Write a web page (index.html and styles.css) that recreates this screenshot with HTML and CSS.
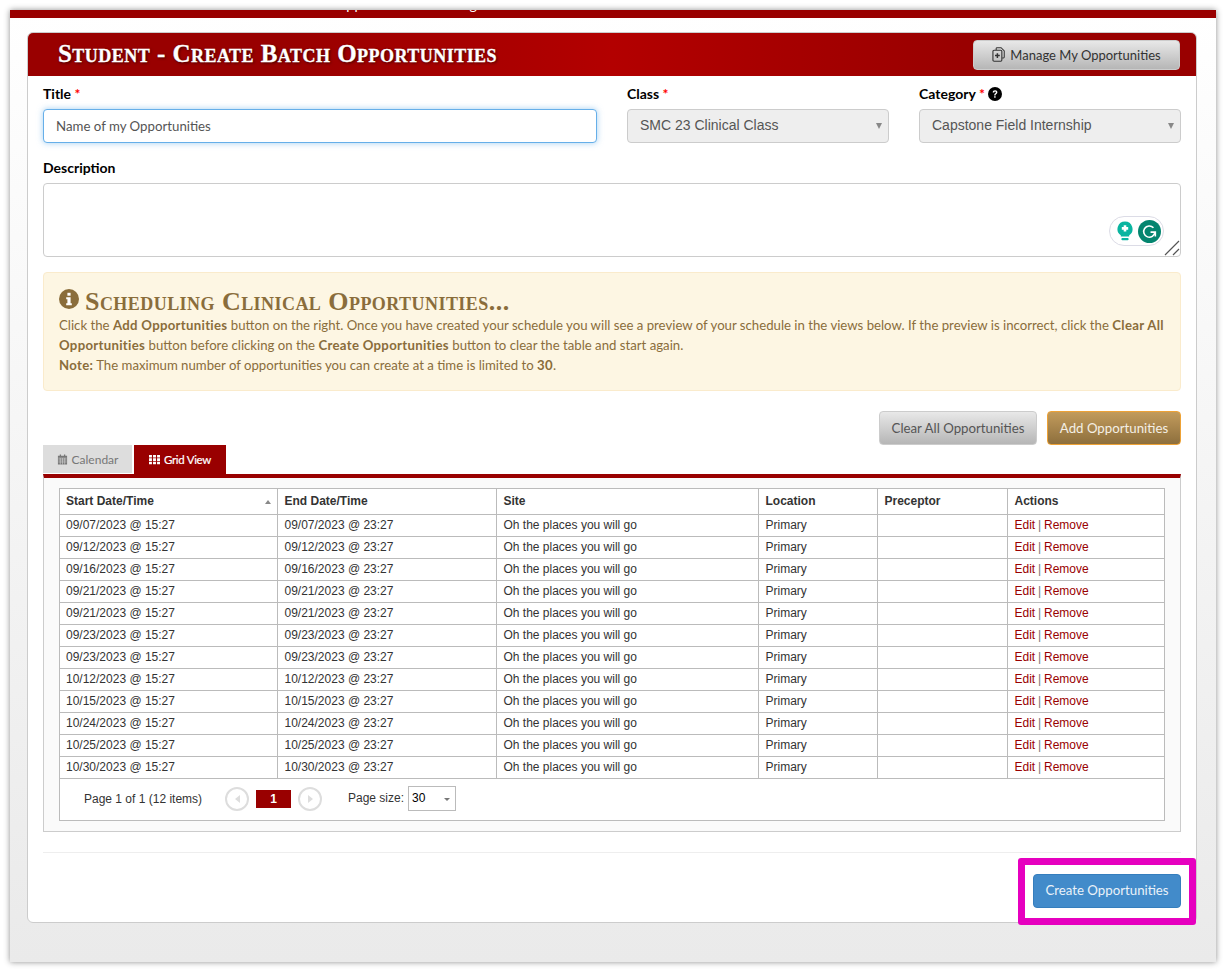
FILE: index.html
```html
<!DOCTYPE html>
<html>
<head>
  <meta charset="UTF-8">
  <title>Student - Create Batch Opportunities</title>
  <link rel="stylesheet" href="styles.css">
</head>
<body>
  <div class="window">
    <div class="top-bar"><span class="top-bar-text">Opportunities Catalog</span></div>

    <div class="card">
      <div class="card-header">
        <div class="card-title">Student - Create Batch Opportunities</div>
        <button class="button button-grey manage-button">
          <svg class="manage-icon" viewBox="0 0 14 16" width="13" height="15"><path d="M4.5 3.2V1.6c0-.5.4-.9.9-.9h4.4l3.4 3.4v6.7c0 .5-.4.9-.9.9H11" fill="none" stroke="#333" stroke-width="1.1"/><rect x="1" y="3.4" width="9.6" height="11.8" rx="1.2" fill="none" stroke="#333" stroke-width="1.2"/><path d="M5.8 6.6v5.2M3.2 9.2h5.2" stroke="#333" stroke-width="1.6"/></svg>
          Manage My Opportunities
        </button>
      </div>

      <div class="card-body">
        <div class="form-row">
          <div class="field">
            <label class="field-label">Title <span class="required">*</span></label>
            <input type="text" class="text-input text-input-focus" value="Name of my Opportunities">
          </div>
          <div class="field">
            <label class="field-label">Class <span class="required">*</span></label>
            <div class="select-wrapper">
              <select class="select-input" disabled><option>SMC 23 Clinical Class</option></select>
            </div>
          </div>
          <div class="field">
            <label class="field-label">Category <span class="required">*</span>
              <svg class="help-icon" viewBox="0 0 14 14" width="14" height="14"><circle cx="7" cy="7" r="7" fill="#000"/><path d="M4.7 5.4c0-1.4 1-2.2 2.4-2.2s2.3.8 2.3 2c0 1.8-1.9 1.7-1.9 3.2H6.2c0-2.2 1.7-2 1.7-3.1 0-.5-.3-.8-.8-.8-.6 0-.9.4-.9 1z" fill="#fff"/><rect x="6.2" y="9.2" width="1.4" height="1.5" fill="#fff"/></svg>
            </label>
            <div class="select-wrapper">
              <select class="select-input" disabled><option>Capstone Field Internship</option></select>
            </div>
          </div>
        </div>

        <div class="field description-field">
          <label class="field-label">Description</label>
          <div class="textarea-wrapper">
            <textarea class="description-input"></textarea>
            <div class="grammarly">
              <svg viewBox="0 0 16 20" width="16" height="20"><path d="M8 .5a7.5 7.5 0 0 0-4.2 13.7V15.5h8.4v-1.3A7.5 7.5 0 0 0 8 .5z" fill="#0ab5a0"/><path d="M8 4.2v6.4M4.8 7.4h6.4" stroke="#fff" stroke-width="2.6"/><rect x="4.4" y="17" width="7.2" height="2.2" rx="1" fill="#0ab5a0"/></svg>
              <svg viewBox="0 0 22 22" width="23" height="23"><circle cx="11" cy="11" r="11" fill="#04856f"/><path d="M16.2 11.6a5.4 5.4 0 1 1-1.4-4.2" fill="none" stroke="#fff" stroke-width="1.5"/><path d="M12 11.6h4.6v4.2" fill="none" stroke="#fff" stroke-width="1.5"/></svg>
            </div>
            <svg class="resize-grip" viewBox="0 0 16 16" width="16" height="16"><path d="M1 15 15 1M9 15l6-6" stroke="#555" stroke-width="1.2"/></svg>
          </div>
        </div>

        <div class="alert">
          <div class="alert-title">
            <svg class="alert-icon" viewBox="0 0 20 20" width="20" height="20"><circle cx="10" cy="10" r="10" fill="#8a6d3b"/><rect x="8.4" y="3.8" width="3.2" height="2.9" fill="#fff"/><path d="M7.2 8.2h4.4v6h1.2v2H7.2v-2h1.2v-4H7.2z" fill="#fff"/></svg>
            <span>Scheduling Clinical Opportunities...</span>
          </div>
          <div class="alert-text">
            Click the <b>Add Opportunities</b> button on the right. Once you have created your schedule you will see a preview of your schedule in the views below. If the preview is incorrect, click the <b>Clear All Opportunities</b> button before clicking on the <b>Create Opportunities</b> button to clear the table and start again.<br>
            <b>Note:</b> The maximum number of opportunities you can create at a time is limited to <b>30</b>.
          </div>
        </div>

        <div class="action-row">
          <button class="button button-grey clear-button">Clear All Opportunities</button>
          <button class="button button-gold add-button">Add Opportunities</button>
        </div>

        <div class="tabs">
          <div class="tab tab-off">
            <svg viewBox="0 0 12 12" width="11" height="11"><path d="M1 2h10v9.5H1zM3 .5h1.4V2H3zM7.6.5H9V2H7.6z" fill="#777"/><path d="M1.5 4.5h9M1.5 6.5h9M1.5 8.7h9M3.6 4.5v7M6 4.5v7M8.4 4.5v7" stroke="#ddd" stroke-width=".6"/></svg>
            Calendar
          </div>
          <div class="tab tab-on">
            <svg viewBox="0 0 12 12" width="11" height="11"><path d="M0 1h3.2v2.8H0zM4.4 1h3.2v2.8H4.4zM8.8 1H12v2.8H8.8zM0 4.7h3.2v2.8H0zM4.4 4.7h3.2v2.8H4.4zM8.8 4.7H12v2.8H8.8zM0 8.4h3.2v2.8H0zM4.4 8.4h3.2v2.8H4.4zM8.8 8.4H12v2.8H8.8z" fill="#fff"/></svg>
            Grid View
          </div>
        </div>

        <div class="grid-panel">
          <div class="grid-box">
            <table class="grid">
              <colgroup>
                <col class="col-start"><col class="col-end"><col class="col-site"><col class="col-location"><col class="col-preceptor"><col>
              </colgroup>
              <thead>
                <tr><th>Start Date/Time<span class="sort-arrow"></span></th><th>End Date/Time</th><th>Site</th><th>Location</th><th>Preceptor</th><th>Actions</th></tr>
              </thead>
              <tbody>
                <tr><td>09/07/2023 @ 15:27</td><td>09/07/2023 @ 23:27</td><td>Oh the places you will go</td><td>Primary</td><td></td><td><a>Edit</a> | <a>Remove</a></td></tr>
                <tr><td>09/12/2023 @ 15:27</td><td>09/12/2023 @ 23:27</td><td>Oh the places you will go</td><td>Primary</td><td></td><td><a>Edit</a> | <a>Remove</a></td></tr>
                <tr><td>09/16/2023 @ 15:27</td><td>09/16/2023 @ 23:27</td><td>Oh the places you will go</td><td>Primary</td><td></td><td><a>Edit</a> | <a>Remove</a></td></tr>
                <tr><td>09/21/2023 @ 15:27</td><td>09/21/2023 @ 23:27</td><td>Oh the places you will go</td><td>Primary</td><td></td><td><a>Edit</a> | <a>Remove</a></td></tr>
                <tr><td>09/21/2023 @ 15:27</td><td>09/21/2023 @ 23:27</td><td>Oh the places you will go</td><td>Primary</td><td></td><td><a>Edit</a> | <a>Remove</a></td></tr>
                <tr><td>09/23/2023 @ 15:27</td><td>09/23/2023 @ 23:27</td><td>Oh the places you will go</td><td>Primary</td><td></td><td><a>Edit</a> | <a>Remove</a></td></tr>
                <tr><td>09/23/2023 @ 15:27</td><td>09/23/2023 @ 23:27</td><td>Oh the places you will go</td><td>Primary</td><td></td><td><a>Edit</a> | <a>Remove</a></td></tr>
                <tr><td>10/12/2023 @ 15:27</td><td>10/12/2023 @ 23:27</td><td>Oh the places you will go</td><td>Primary</td><td></td><td><a>Edit</a> | <a>Remove</a></td></tr>
                <tr><td>10/15/2023 @ 15:27</td><td>10/15/2023 @ 23:27</td><td>Oh the places you will go</td><td>Primary</td><td></td><td><a>Edit</a> | <a>Remove</a></td></tr>
                <tr><td>10/24/2023 @ 15:27</td><td>10/24/2023 @ 23:27</td><td>Oh the places you will go</td><td>Primary</td><td></td><td><a>Edit</a> | <a>Remove</a></td></tr>
                <tr><td>10/25/2023 @ 15:27</td><td>10/25/2023 @ 23:27</td><td>Oh the places you will go</td><td>Primary</td><td></td><td><a>Edit</a> | <a>Remove</a></td></tr>
                <tr><td>10/30/2023 @ 15:27</td><td>10/30/2023 @ 23:27</td><td>Oh the places you will go</td><td>Primary</td><td></td><td><a>Edit</a> | <a>Remove</a></td></tr>
              </tbody>
            </table>
            <div class="pager">
              <span class="pager-info">Page 1 of 1 (12 items)</span>
              <span class="pager-nav"><i class="pager-arrow pager-prev"></i></span>
              <span class="pager-current">1</span>
              <span class="pager-nav"><i class="pager-arrow pager-next"></i></span>
              <span class="pager-size">Page size:</span>
              <span class="pager-select">30</span>
            </div>
          </div>
        </div>

        <div class="divider"></div>

        <div class="footer-row">
          <button class="button button-blue">Create Opportunities</button>
        </div>
      </div>
    </div>

    <div class="highlight-box"></div>
  </div>
</body>
</html>
```

FILE: styles.css
```css
* {
  box-sizing: border-box;
}

body {
  margin: 0;
  padding: 10px;
  background: #fff;
  font-family: Lato, Arial, sans-serif;
  font-size: 14px;
  color: #333;
}

.window {
  position: relative;
  width: 1206px;
  height: 952px;
  background: linear-gradient(#fff, #eaeaea);
  box-shadow: 0 0 6px rgba(0,0,0,0.45);
}

.top-bar {
  height: 8px;
  background: #990000;
  overflow: hidden;
  color: #fff;
  font-size: 14px;
  letter-spacing: 0.3px;
  padding-left: 325px;
}

.top-bar-text {
  display: block;
  margin-top: -14px;
  line-height: 18px;
}

.card {
  width: 1170px;
  height: 891px;
  margin: 14px 0 0 17px;
  background: #fff;
  border: 1px solid #ccc;
  border-radius: 6px;
  overflow: hidden;
}

.card-header {
  display: flex;
  align-items: center;
  justify-content: space-between;
  height: 43px;
  padding: 0 16px 0 30px;
  background: linear-gradient(to right, #990000 0%, #990000 22%, #b30000 50%, #990000 80%, #990000 100%);
}

.card-title {
  margin-top: -2px;
  font-family: "Liberation Serif", serif;
  font-variant: small-caps;
  font-weight: bold;
  font-size: 25px;
  letter-spacing: 0.47px;
  color: #fff;
  -webkit-text-stroke: 0.3px #fff;
  text-shadow: 1px 1px 3px rgba(0,0,0,0.7);
}

.card-body {
  padding: 9px 15px 0;
}

.button {
  height: 34px;
  padding: 0;
  border: 1px solid #ccc;
  border-radius: 4px;
  font-family: Lato, Arial, sans-serif;
  font-size: 13.25px;
  white-space: nowrap;
}

.button-grey {
  background: linear-gradient(#e8e8e8, #b6b6b6);
  color: #444;
}

.button-gold {
  background: linear-gradient(#c29b5c, #8d6f3d);
  border-color: #eea236;
  color: #f4efe5;
}

.button-blue {
  width: 148px;
  padding-bottom: 2px;
  background: #428bca;
  border-color: #357ebd;
  color: #eaf2f9;
}

.manage-button {
  display: flex;
  align-items: center;
  gap: 5px;
  width: 207px;
  height: 30px;
  justify-content: center;
  font-size: 13px;
  color: #333;
}

.manage-icon {
  flex: none;
}

.form-row {
  display: grid;
  grid-template-columns: 554px 262px 262px;
  gap: 30px;
  padding-top: 1px;
}

.field-label {
  display: block;
  height: 23px;
  line-height: 16px;
  font-weight: bold;
  font-size: 14px;
  color: #000;
}

.required {
  color: #f00;
}

.help-icon {
  margin: -4px 0;
  vertical-align: 2px;
}

.text-input {
  display: block;
  width: 100%;
  height: 34px;
  padding: 0 12px 1px;
  border: 1px solid #ccc;
  border-radius: 4px;
  font-family: Lato, Arial, sans-serif;
  font-size: 13.25px;
  color: #555;
  background: #fff;
}

.text-input-focus {
  border-color: #66afe9;
  outline: none;
  box-shadow: 0 0 6px rgba(102,175,233,0.6);
}

.select-wrapper {
  position: relative;
}

.select-wrapper::after {
  content: "";
  position: absolute;
  top: 14px;
  right: 7px;
  border-left: 3px solid transparent;
  border-right: 3px solid transparent;
  border-top: 6px solid #888;
}

.select-input {
  display: block;
  width: 100%;
  height: 34px;
  padding: 0 12px 2px;
  border: 1px solid #ccc;
  border-radius: 4px;
  font-family: "Liberation Sans", Arial, sans-serif;
  font-size: 14px;
  color: #555;
  background: #eee;
  opacity: 1;
  appearance: none;
}

.description-field {
  margin-top: 17px;
}

.textarea-wrapper {
  position: relative;
}

.description-input {
  display: block;
  width: 100%;
  height: 74px;
  border: 1px solid #ccc;
  border-radius: 4px;
  background: #fff;
  resize: none;
}

.grammarly {
  position: absolute;
  top: 33px;
  right: 17px;
  display: flex;
  align-items: center;
  justify-content: space-between;
  width: 55px;
  height: 30px;
  padding: 0 2px 0 7px;
  background: #fff;
  border: 1px solid #dcdce6;
  border-radius: 15px;
}

.resize-grip {
  position: absolute;
  right: 1px;
  bottom: 1px;
}

.alert {
  height: 119px;
  margin-top: 15px;
  padding: 17px 5px 0 15px;
  background: #fdf6e3;
  border: 1px solid #faebcc;
  border-radius: 4px;
  color: #8a6d3b;
}

.alert-title {
  display: flex;
  align-items: center;
  gap: 6px;
  height: 24px;
  font-family: "Liberation Serif", serif;
  font-variant: small-caps;
  font-weight: bold;
  font-size: 26px;
  letter-spacing: 0.45px;
}

.alert-icon {
  flex: none;
  margin-top: -6px;
}

.alert-text {
  font-size: 13.2px;
  line-height: 20px;
  margin-top: 1px;
}

.alert-text b {
  letter-spacing: 0.3px;
}

.action-row {
  display: flex;
  justify-content: flex-end;
  gap: 10px;
  margin-top: 20px;
}

.clear-button {
  width: 158px;
  color: #555;
}

.add-button {
  width: 134px;
}

.tabs {
  display: flex;
  gap: 2px;
  height: 29px;
}

.tab {
  display: flex;
  align-items: center;
  justify-content: center;
  gap: 4px;
  font-size: 12px;
}

.tab-off {
  width: 89px;
  height: 28px;
  background: #ddd;
  color: #777;
}

.tab-on {
  width: 92px;
  font-size: 11.5px;
  letter-spacing: -0.3px;
  -webkit-text-stroke: 0.2px #fff;
  background: #990000;
  color: #fff;
}

.grid-panel {
  height: 358px;
  padding: 10px 15px 0;
  background: #fafafa;
  border: 1px solid #ccc;
  border-top: 4px solid #990000;
}

.grid-box {
  width: 1106px;
  height: 333px;
  background: #fff;
  border: 1px solid #bbb;
}

.grid {
  width: 100%;
  border-collapse: collapse;
  table-layout: fixed;
  font-family: "Liberation Sans", Arial, sans-serif;
  font-size: 12px;
  color: #333;
}

.col-start { width: 217px; }
.col-end { width: 219px; }
.col-site { width: 262px; }
.col-location { width: 119px; }
.col-preceptor { width: 130px; }

.grid th {
  position: relative;
  height: 25px;
  padding: 0 6px 0 7px;
  text-align: left;
  font-weight: bold;
  border-right: 1px solid #bbb;
  border-bottom: 1px solid #bbb;
}

.grid td {
  height: 22px;
  padding: 0 6px 0 7px;
  border-right: 1px solid #bbb;
  border-bottom: 1px solid #bbb;
}

.grid th:first-child,
.grid td:first-child {
  padding-left: 6px;
}

.grid th:last-child,
.grid td:last-child {
  border-right: none;
}

.grid td:last-child {
  color: #777;
  word-spacing: -0.5px;
}

.grid a {
  color: #990000;
}

.sort-arrow {
  position: absolute;
  top: 11px;
  right: 6px;
  border-left: 3px solid transparent;
  border-right: 3px solid transparent;
  border-bottom: 4px solid #888;
}

.pager {
  display: flex;
  align-items: center;
  height: 42px;
  padding: 0 0 2px 24px;
  font-family: "Liberation Sans", Arial, sans-serif;
  font-size: 12px;
  color: #333;
}

.pager-info {
  width: 141px;
}

.pager-nav {
  display: flex;
  align-items: center;
  justify-content: center;
  width: 24px;
  height: 24px;
  border: 2px solid #ddd;
  border-radius: 50%;
}

.pager-arrow {
  border-top: 4px solid transparent;
  border-bottom: 4px solid transparent;
}

.pager-prev {
  border-right: 5px solid #ddd;
}

.pager-next {
  border-left: 5px solid #ddd;
}

.pager-current {
  width: 35px;
  height: 18px;
  margin: 0 7px;
  line-height: 18px;
  text-align: center;
  font-weight: bold;
  background: #990000;
  color: #fff;
}

.pager-size {
  margin: -1px 0 0 26px;
}

.pager-select {
  position: relative;
  width: 48px;
  height: 25px;
  margin-left: 4px;
  padding-left: 3px;
  line-height: 23px;
  border: 1px solid #bbb;
  color: #000;
}

.pager-select::after {
  content: "";
  position: absolute;
  top: 11px;
  right: 5px;
  border-left: 3px solid transparent;
  border-right: 3px solid transparent;
  border-top: 3px solid #777;
}

.divider {
  height: 1px;
  margin-top: 20px;
  background: #eee;
}

.footer-row {
  display: flex;
  justify-content: flex-end;
  margin-top: 21px;
}

.highlight-box {
  position: absolute;
  left: 1008px;
  top: 848px;
  width: 178px;
  height: 67px;
  border: 7px solid #e600bf;
  border-radius: 3px;
}
```
